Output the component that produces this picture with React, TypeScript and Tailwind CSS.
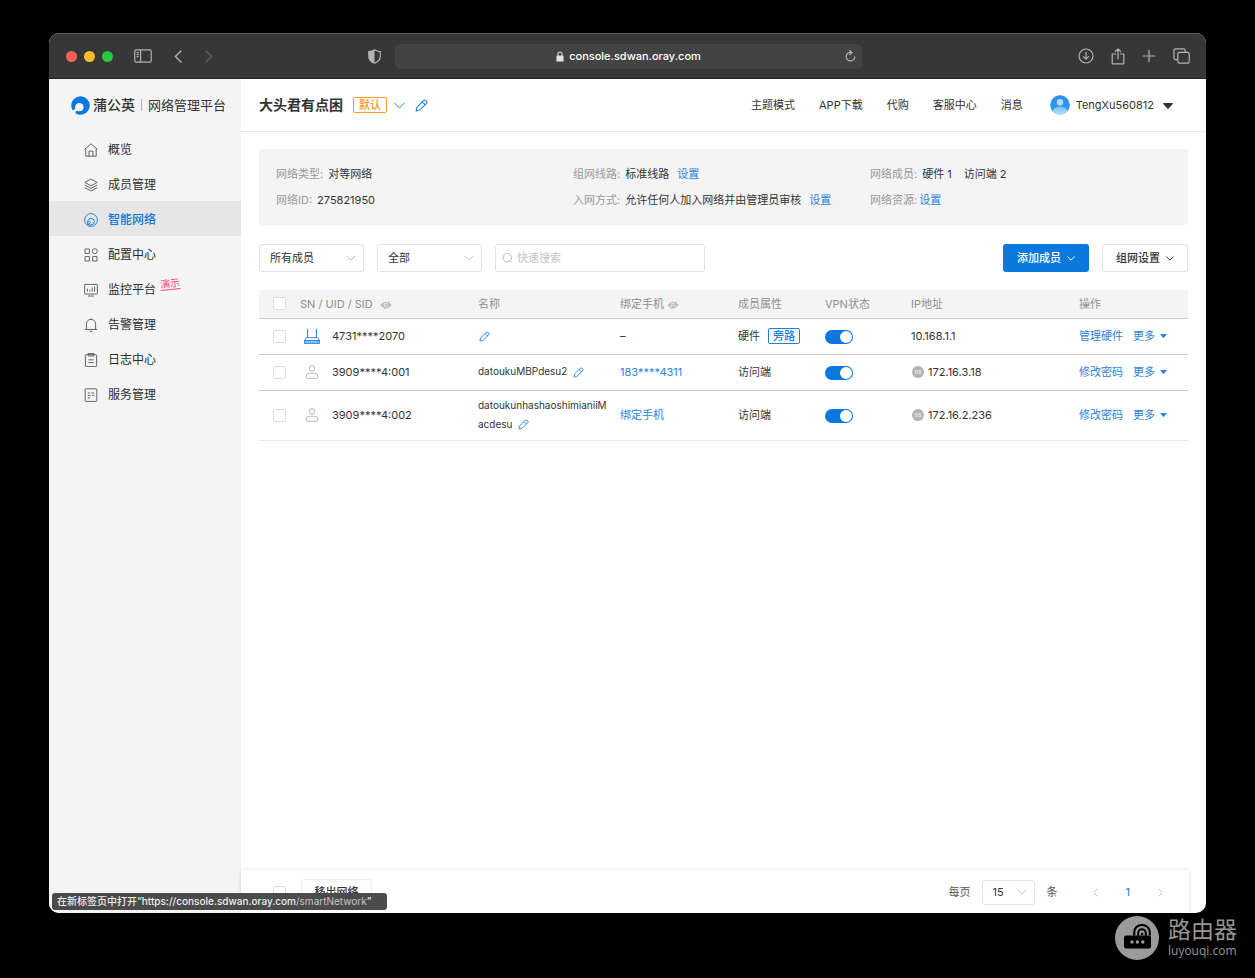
import React from "react";

const blue = "text-[#2a82dc]";

function Pencil({ className = "size-3" }: { className?: string }) {
  return (
    <svg viewBox="0 0 24 24" fill="none" stroke="currentColor" strokeWidth="2" strokeLinejoin="round" strokeLinecap="round" className={className} aria-hidden="true">
      <path d="M15.5 3.2 Q17.4 1 19.8 2.9 L21.2 4.2 Q23.2 6.2 21.3 8.2 L8.6 20.4 L2 22 L3.4 15.6 Z" />
      <path d="M13.4 5.6 L18.8 10.6" />
    </svg>
  );
}

function Chevron({ className = "" }: { className?: string }) {
  return (
    <svg viewBox="0 0 12 7" fill="none" stroke="currentColor" className={className} aria-hidden="true">
      <path d="M1 1 L6 6 L11 1" vectorEffect="non-scaling-stroke" strokeLinecap="round" strokeLinejoin="round" />
    </svg>
  );
}

function Triangle({ className = "" }: { className?: string }) {
  return (
    <svg viewBox="0 0 10 6" fill="currentColor" className={className} aria-hidden="true">
      <path d="M0.6 0 H9.4 Q10.2 0.1 9.7 0.9 L5.6 5.6 Q5 6.2 4.4 5.6 L0.3 0.9 Q-0.2 0.1 0.6 0Z" />
    </svg>
  );
}

function EyeOff() {
  return (
    <svg viewBox="0 0 24 16" className="mt-[2px] h-2 w-3" aria-hidden="true">
      <path d="M0.5 8 Q12 -5.5 23.5 8 Q12 21.5 0.5 8Z" fill="#bdbdbd" />
      <circle cx="12" cy="8" r="4.6" fill="#f4f4f4" />
      <circle cx="12" cy="8" r="3.2" fill="#b9b9b9" />
      <path d="M17 0 L6 16" stroke="#f4f4f4" strokeWidth="1.6" />
      <path d="M19 0 L8 16" stroke="#aaaaaa" strokeWidth="1.6" />
    </svg>
  );
}

const menuIcons: Record<string, React.ReactNode> = {
  home: (
    <>
      <path d="M0.6 6.3 L7 0.8 L13.4 6.3" />
      <path d="M1.8 5.4 V13.2 H12.2 V5.4" />
      <path d="M5 13 V8.2 H9 V13" />
    </>
  ),
  layers: (
    <>
      <path d="M7 1 L13.2 4.4 L7 7.8 L0.8 4.4Z" />
      <path d="M0.8 7 L7 10.4 L13.2 7" />
      <path d="M0.8 9.6 L7 13 L13.2 9.6" />
    </>
  ),
  network: (
    <>
      <circle cx="7" cy="7" r="6.4" />
      <path d="M3.8 11 Q2.8 6.4 6.6 5.4 Q10.2 5.2 10.4 8.6 Q10.2 11.8 7 12 Q5 12 3.4 11.4" />
      <path d="M4.4 8.8 Q6.2 7.6 6.6 9.4 Q6.4 11 4 11.2" />
    </>
  ),
  grid: (
    <>
      <rect x="1" y="1" width="4.4" height="4.4" />
      <circle cx="10.8" cy="3.2" r="2.5" />
      <rect x="1" y="8.6" width="4.4" height="4.4" />
      <rect x="8.6" y="8.6" width="4.4" height="4.4" />
    </>
  ),
  monitor: (
    <>
      <rect x="0.6" y="1.4" width="12.8" height="9.6" rx="0.6" />
      <path d="M4 13 H10 M3.4 5.6 V8.6 M5.8 6.6 V8.6 M8.2 4.4 V8.6 M10.6 3.6 V8.6" />
    </>
  ),
  bell: (
    <>
      <path d="M2.4 11.4 V6.2 Q2.6 1.6 7 1.4 Q11.4 1.6 11.6 6.2 V11.4" />
      <path d="M0.8 11.5 H13.2 M5.6 13.3 H8.4 M7 0.4 V1.4" />
    </>
  ),
  clipboard: (
    <>
      <rect x="1.4" y="1.6" width="11.2" height="12" rx="0.8" />
      <path d="M4.2 0.6 H9.8 V3 H4.2Z M4.4 6.8 H9.6 M4.4 9.6 H9.6" />
    </>
  ),
  form: (
    <>
      <rect x="1.2" y="0.8" width="11.6" height="12.6" rx="0.6" />
      <path d="M3.8 5 H6 M7.4 5 H10.2 M3.8 7.4 H6.6 M8 7.4 H10.2 M3.8 10 H6" />
    </>
  ),
};

const menu = [
  { label: "概览", icon: "home" },
  { label: "成员管理", icon: "layers" },
  { label: "智能网络", icon: "network", active: true },
  { label: "配置中心", icon: "grid" },
  { label: "监控平台", icon: "monitor", demo: true },
  { label: "告警管理", icon: "bell" },
  { label: "日志中心", icon: "clipboard" },
  { label: "服务管理", icon: "form" },
];

function TitleBar() {
  return (
    <div className="flex h-[46px] shrink-0 items-center border-t border-b border-t-[#5c5c5c] border-b-[#222222] bg-[#373737] pr-4 pl-[17px] text-[#b4b4b4]">
      <div className="flex flex-1 items-center">
        <div className="flex gap-[7px]">
          <span className="size-[11px] rounded-full bg-[#fe5f57]" />
          <span className="size-[11px] rounded-full bg-[#febb2e]" />
          <span className="size-[11px] rounded-full bg-[#28c840]" />
        </div>
        <button type="button" aria-label="边栏" className="ml-[21px]">
          <svg viewBox="0 0 18 14" fill="none" stroke="currentColor" strokeWidth="1.2" className="h-[14px] w-[18px]">
            <rect x="0.8" y="0.8" width="16.4" height="12.4" rx="1.6" />
            <path d="M6.6 1 V13 M2.6 3.6 H4.8 M2.6 5.6 H4.8 M2.6 7.6 H4.8" />
          </svg>
        </button>
        <button type="button" aria-label="后退" className="ml-[22px]">
          <svg viewBox="0 0 8 13" fill="none" stroke="currentColor" strokeWidth="1.4" strokeLinecap="round" strokeLinejoin="round" className="h-[13px] w-2">
            <path d="M7 1 L1.4 6.5 L7 12" />
          </svg>
        </button>
        <button type="button" aria-label="前进" className="ml-[23px] text-[#5e5e5e]">
          <svg viewBox="0 0 8 13" fill="none" stroke="currentColor" strokeWidth="1.4" strokeLinecap="round" strokeLinejoin="round" className="h-[13px] w-2">
            <path d="M1 1 L6.6 6.5 L1 12" />
          </svg>
        </button>
        <button type="button" aria-label="隐私报告" className="mr-[14px] ml-auto">
          <svg viewBox="0 0 13 15" className="h-[15px] w-[13px]">
            <path d="M6.5 0.8 Q9 2.4 12.2 2.6 V7.6 Q12 12 6.5 14.2 Q1 12 0.8 7.6 V2.6 Q4 2.4 6.5 0.8Z" fill="none" stroke="currentColor" strokeWidth="1.2" />
            <path d="M6.5 0.8 V14.2 Q1 12 0.8 7.6 V2.6 Q4 2.4 6.5 0.8Z" fill="currentColor" />
          </svg>
        </button>
      </div>
      <div className="flex h-[25px] w-[42%] max-w-[467px] items-center rounded-[5px] bg-[#434343] px-[6px]">
        <div className="flex flex-1 items-center justify-center gap-[5px] pl-3 text-[11px] font-medium text-white">
          <svg viewBox="0 0 8 11" className="h-[11px] w-2" aria-hidden="true">
            <rect x="0.4" y="4.6" width="7.2" height="6" rx="0.9" fill="#dedede" />
            <path d="M2 5 V3 Q2 1 4 1 Q6 1 6 3 V5" fill="none" stroke="#dedede" strokeWidth="1.1" />
          </svg>
          console.sdwan.oray.com
        </div>
        <button type="button" aria-label="重新载入">
          <svg viewBox="0 0 11 12" fill="none" stroke="currentColor" strokeWidth="1.2" strokeLinecap="round" className="h-3 w-[11px]">
            <path d="M6.2 2.4 A4.3 4.3 0 1 0 9.8 6.8" />
            <path d="M4.8 0.6 L7 2.5 L4.9 4.6" />
          </svg>
        </button>
      </div>
      <div className="flex flex-1 items-center justify-end gap-[17px]">
        <button type="button" aria-label="下载">
          <svg viewBox="0 0 16 16" fill="none" stroke="currentColor" strokeWidth="1.2" strokeLinecap="round" strokeLinejoin="round" className="size-4">
            <circle cx="8" cy="8" r="7" />
            <path d="M8 4.4 V11 M5.4 8.6 L8 11.2 L10.6 8.6" />
          </svg>
        </button>
        <button type="button" aria-label="分享">
          <svg viewBox="0 0 14 17" fill="none" stroke="currentColor" strokeWidth="1.2" strokeLinecap="round" strokeLinejoin="round" className="h-[17px] w-[14px]">
            <path d="M4.6 6 H1.2 V15.8 H12.8 V6 H9.4 M7 10.8 V1 M4.2 3.6 L7 0.9 L9.8 3.6" />
          </svg>
        </button>
        <button type="button" aria-label="新标签页">
          <svg viewBox="0 0 14 14" fill="none" stroke="currentColor" strokeWidth="1.2" strokeLinecap="round" className="size-[14px]">
            <path d="M7 1.2 V12.8 M1.2 7 H12.8" />
          </svg>
        </button>
        <button type="button" aria-label="标签页概览">
          <svg viewBox="0 0 17 16" fill="none" stroke="currentColor" strokeWidth="1.2" className="h-4 w-[17px]">
            <rect x="4.8" y="4.4" width="11.4" height="10.8" rx="1.6" />
            <path d="M4.6 11.6 H2.6 Q1 11.6 1 10 V2.4 Q1 0.8 2.6 0.8 H10.6 Q12.2 0.8 12.2 2.4 V4.2" />
          </svg>
        </button>
      </div>
    </div>
  );
}

function Sidebar() {
  return (
    <aside className="w-48 shrink-0 bg-[#f4f4f4]">
      <div className="flex h-[52px] items-center pl-[22px] text-[#333333]">
        <svg viewBox="0 0 20 20" className="size-[19px]" aria-hidden="true">
          <circle cx="10" cy="10" r="9.8" fill="#0a78dc" />
          <circle cx="8.8" cy="11.8" r="4.5" fill="#f4f4f4" />
          <path d="M5 12.6 L3.2 14.4 L1.4 15 L4.2 18.6 L5.2 16.2 L8 15.6 Z" fill="#f4f4f4" />
          <path d="M5.2 16 Q8.4 17 10.6 15.4 L12 18 L9 19.6 L5.4 18.8 Z" fill="#0a78dc" />
        </svg>
        <span className="ml-[3px] text-[14px] leading-5 font-medium">蒲公英</span>
        <span className="mx-[6px] h-3 w-px bg-[#b4b4b4]" />
        <span className="text-[13px] leading-5">网络管理平台</span>
      </div>
      <nav>
        {menu.map((m) => (
          <a
            key={m.label}
            href="#"
            className={
              m.active
                ? "flex h-[35px] items-center gap-[10px] bg-[#e6e6e6] pt-[3px] pl-[35px] text-[12px] font-medium text-[#0f78d6]"
                : "flex h-[35px] items-center gap-[10px] pt-[3px] pl-[35px] text-[12px] text-[#2b2b2b]"
            }
          >
            <svg viewBox="0 0 14 14" fill="none" stroke="currentColor" strokeWidth="0.9" strokeLinejoin="round" className={m.active ? "size-[14px]" : "size-[14px] text-[#555555]"} aria-hidden="true">
              {menuIcons[m.icon]}
            </svg>
            <span className="relative">
              {m.label}
              {m.demo && (
                <span className="absolute -top-1 left-full ml-1 -rotate-6 border-b border-[#ee4d80] text-[10px] leading-3 whitespace-nowrap text-[#ee3f78]">
                  演示
                </span>
              )}
            </span>
          </a>
        ))}
      </nav>
    </aside>
  );
}

function Header() {
  return (
    <header className="flex h-[53px] shrink-0 items-center border-b border-[#e6e6e6] pr-[33px] pl-[18px]">
      <h1 className="text-[14px] leading-5 font-bold text-[#333333]">大头君有点困</h1>
      <span className="ml-[10px] rounded-[2px] border border-[#ff9d2b] px-[5px] text-[11px] leading-[14px] font-medium text-[#ff9414]">默认</span>
      <button type="button" aria-label="切换网络" className={`ml-[6px] ${blue}`}>
        <Chevron className="h-[7px] w-[13px]" />
      </button>
      <button type="button" aria-label="修改网络名称" className={`ml-[9px] ${blue}`}>
        <Pencil className="size-[13px]" />
      </button>
      <nav className="ml-auto flex gap-6 text-[11px] text-[#333333]">
        <a href="#">主题模式</a>
        <a href="#">APP下载</a>
        <a href="#">代购</a>
        <a href="#">客服中心</a>
        <a href="#">消息</a>
      </nav>
      <button type="button" className="ml-[27px] flex items-center text-[11px] text-[#333333]">
        <svg viewBox="0 0 20 20" className="mr-[6px] size-5" aria-hidden="true">
          <defs>
            <linearGradient id="avatar" x1="0" y1="0" x2="0" y2="1">
              <stop offset="0" stopColor="#2a92e8" />
              <stop offset="1" stopColor="#2f9cf6" />
            </linearGradient>
            <linearGradient id="body" x1="0" y1="0" x2="0" y2="1">
              <stop offset="0" stopColor="#7fc0f8" />
              <stop offset="1" stopColor="#b9dffc" />
            </linearGradient>
            <clipPath id="disc"><circle cx="10" cy="10" r="10" /></clipPath>
          </defs>
          <g clipPath="url(#disc)">
            <circle cx="10" cy="10" r="10" fill="url(#avatar)" />
            <path d="M1.6 20 Q2.6 11.6 10 11.6 Q17.4 11.6 18.4 20Z" fill="url(#body)" />
          </g>
          <circle cx="10" cy="7.2" r="3.2" fill="#b5dbfb" />
        </svg>
        <span>TengXu560812</span>
        <Triangle className="mt-px ml-[9px] h-[6px] w-[10px]" />
      </button>
    </header>
  );
}

function SetLink() {
  return <a href="#" className={`ml-2 ${blue}`}>设置</a>;
}

function Info({ label, children }: { label: string; children?: React.ReactNode }) {
  return (
    <div className="flex items-center whitespace-nowrap">
      <dt className="text-[#999999]">{label}:</dt>
      <dd className="ml-[5px] flex items-center">{children}</dd>
    </div>
  );
}

function Select({ label, value, className }: { label: string; value: string; className: string }) {
  return (
    <div className={`relative ${className}`}>
      <select aria-label={label} className="size-full appearance-none rounded-[3px] border border-[#e2e2e2] bg-white pl-[10px] text-[11px] text-[#333333]">
        <option>{value}</option>
      </select>
      <Chevron className="pointer-events-none absolute top-1/2 right-2 h-[6px] w-[10px] -translate-y-1/2 text-[#c0c4cc]" />
    </div>
  );
}

function Tick({ label }: { label: string }) {
  return <input type="checkbox" aria-label={label} className="block size-[13px] appearance-none rounded-[2px] border border-[#dddddd] bg-white" />;
}

function Router() {
  return (
    <svg viewBox="0 0 16 16" fill="none" stroke="#2a82dc" className="size-4" aria-hidden="true">
      <path d="M3.6 1 V9.6 M12.4 1 V9.6" strokeWidth="1.1" />
      <path d="M2.2 9.6 H13.8 L15.4 12.6 H0.6Z" strokeWidth="0.9" />
      <rect x="0.6" y="12.4" width="14.8" height="3" fill="#74b2ef" strokeWidth="0.9" />
      <path d="M2.6 14 H13.4" stroke="#d8eafc" strokeWidth="0.8" strokeDasharray="1.4 0.8" />
    </svg>
  );
}

function Person() {
  return (
    <svg viewBox="0 0 16 16" fill="none" stroke="#b8b8b8" className="size-4" aria-hidden="true">
      <circle cx="8" cy="4.4" r="2.8" />
      <path d="M2.2 12.4 Q2.2 9.2 5.4 9.2 H10.6 Q13.8 9.2 13.8 12.4 V12.8 Q13.8 14.4 12.2 14.4 H3.8 Q2.2 14.4 2.2 12.8Z" />
    </svg>
  );
}

const rows = [
  { sn: "4731****2070", router: true, name: "", phone: "–", type: "硬件", side: true, ip: "10.168.1.1", os: false, action: "管理硬件" },
  { sn: "3909****4:001", router: false, name: "datoukuMBPdesu2", phone: "183****4311", type: "访问端", side: false, ip: "172.16.3.18", os: true, action: "修改密码" },
  { sn: "3909****4:002", router: false, name: "datoukunhashaoshimianiiMacdesu", phone: "绑定手机", type: "访问端", side: false, ip: "172.16.2.236", os: true, action: "修改密码" },
];

function Members() {
  return (
    <table className="mt-[18px] w-full table-fixed border-collapse text-left text-[11px] text-[#333333]">
      <colgroup>
        <col className="w-[31px]" />
        <col className="w-[178px]" />
        <col className="w-[142px]" />
        <col className="w-[118px]" />
        <col className="w-[87px]" />
        <col className="w-[86px]" />
        <col className="w-[168px]" />
        <col />
      </colgroup>
      <thead>
        <tr className="h-7 border-b border-[#cfcfcf] bg-[#f4f4f4] text-[#8f8f8f] [&>th]:pl-[10px] [&>th]:font-normal">
          <th className="pl-[14px]!"><Tick label="全选" /></th>
          <th><span className="flex items-center gap-[7px]">SN / UID / SID <EyeOff /></span></th>
          <th>名称</th>
          <th><span className="flex items-center gap-[3px]">绑定手机 <EyeOff /></span></th>
          <th>成员属性</th>
          <th>VPN状态</th>
          <th>IP地址</th>
          <th>操作</th>
        </tr>
      </thead>
      <tbody>
        {rows.map((r) => (
          <tr key={r.sn} className="h-9 border-b border-[#cfcfcf] last:border-[#e8e8e8] [&>td]:pl-[10px]">
            <td className="pl-[14px]!"><Tick label={r.sn} /></td>
            <td>
              <span className="flex items-center gap-3 pl-1">
                {r.router ? <Router /> : <Person />}
                <span>{r.sn}</span>
              </span>
            </td>
            <td className="pt-[5px] pb-[6px] text-[10px] leading-[19px] break-all">
              {r.name}
              <button type="button" aria-label="修改名称" className={`align-middle ${blue} ${r.name ? "ml-[6px]" : "ml-px"}`}>
                <Pencil className="size-[11px]" />
              </button>
            </td>
            <td>{r.phone === "–" ? "–" : <a href="#" className={blue}>{r.phone}</a>}</td>
            <td>
              <span className="flex items-center">
                {r.type}
                {r.side && <span className="ml-2 rounded-[2px] border border-[#1a80dc] px-1 leading-[14px] font-medium text-[#1a80dc]">旁路</span>}
              </span>
            </td>
            <td>
              <input
                type="checkbox"
                role="switch"
                defaultChecked
                aria-label={`${r.sn} VPN`}
                className="mt-px flex h-[14px] w-7 appearance-none items-center justify-end rounded-full bg-[#0a78dc] pr-px before:size-3 before:rounded-full before:bg-white"
              />
            </td>
            <td>
              <span className="flex items-center gap-1">
                {r.os && <span className="ml-px flex size-3 items-center justify-center rounded-full bg-[#b3b3b3] text-[6px] leading-none text-white">os</span>}
                {r.ip}
              </span>
            </td>
            <td>
              <span className={`flex items-center ${blue}`}>
                <a href="#">{r.action}</a>
                <button type="button" className="ml-[10px] flex items-center gap-[5px]">
                  更多 <Triangle className="h-1 w-[7px]" />
                </button>
              </span>
            </td>
          </tr>
        ))}
      </tbody>
    </table>
  );
}

function Pager() {
  return (
    <footer className="mr-[17px] flex h-[43px] shrink-0 items-center overflow-hidden pt-px pr-6 pl-8 text-[11px] text-[#555555] shadow-[0_0_4px_rgba(0,0,0,0.14)]">
      <Tick label="全选本页" />
      <button type="button" className="ml-[15px] h-[26px] w-[71px] rounded-[3px] border border-[#ececec] font-medium text-[#333333]">移出网络</button>
      <span className="ml-auto">每页</span>
      <Select label="每页条数" value="15" className="mr-3 ml-[11px] h-[25px] w-[53px]" />
      <span>条</span>
      <button type="button" aria-label="上一页" className="ml-[33px] text-[#c0c0c0]">
        <Chevron className="h-[5px] w-[9px] rotate-90" />
      </button>
      <button type="button" className="mx-[26px] text-[#1a78d2]">1</button>
      <button type="button" aria-label="下一页" className="text-[#c0c0c0]">
        <Chevron className="h-[5px] w-[9px] -rotate-90" />
      </button>
    </footer>
  );
}

function Watermark() {
  return (
    <div className="flex h-[65px] shrink-0 items-start justify-end gap-[9px] pt-[3px] pr-[17px] text-[#969696]">
      <svg viewBox="0 0 44 44" className="size-11" aria-hidden="true">
        <circle cx="22" cy="22" r="22" fill="#9b9b9b" />
        <rect x="9" y="19.6" width="27" height="13" rx="2" fill="#000" />
        <circle cx="17" cy="26" r="1.7" fill="#9b9b9b" />
        <circle cx="22.4" cy="26" r="1.7" fill="#9b9b9b" />
        <circle cx="27.8" cy="26" r="1.7" fill="#9b9b9b" />
        <path d="M19.2 19.6 V16.6 A7.8 7.8 0 0 1 34.8 16.6 V19.6" fill="none" stroke="#000" strokeWidth="2.2" />
        <path d="M23.2 19.8 V17 A3.8 3.8 0 0 1 30.8 17 V19.8" fill="none" stroke="#000" strokeWidth="2" />
        <circle cx="27" cy="18" r="1.3" fill="#000" />
      </svg>
      <div className="w-[70px]">
        <div className="text-[23px] leading-[29px]">路由器</div>
        <div className="font-['Open_Sans',sans-serif] text-[12px] leading-3">luyouqi.com</div>
      </div>
    </div>
  );
}

export default function App() {
  return (
    <div lang="zh-CN" className="flex min-h-screen flex-col bg-black pt-[33px] font-['Inter','Noto_Sans_CJK_SC',sans-serif]">
      <div className="relative mx-[49px] flex flex-1 flex-col overflow-hidden rounded-[10px] bg-white">
        <TitleBar />
        <div className="flex flex-1">
          <Sidebar />
          <main className="flex min-w-0 flex-1 flex-col">
            <Header />
            <div className="flex-1 px-[18px] pt-[17px]">
              <dl className="grid grid-cols-[297fr_297fr_301fr] gap-y-[10px] rounded-[3px] bg-[#f4f4f4] px-[17px] py-[17px] text-[11px] leading-4 text-[#333333]">
                <Info label="网络类型">对等网络</Info>
                <Info label="组网线路">标准线路<SetLink /></Info>
                <Info label="网络成员">硬件 1<span className="ml-3">访问端 2</span></Info>
                <Info label="网络ID">275821950</Info>
                <Info label="入网方式">允许任何人加入网络并由管理员审核<SetLink /></Info>
                <div className="flex items-center">
                  <dt className="text-[#999999]">网络资源:</dt>
                  <dd className="ml-[2px]"><a href="#" className={blue}>设置</a></dd>
                </div>
              </dl>
              <div className="mt-[19px] flex gap-[13px]">
                <Select label="成员" value="所有成员" className="h-7 w-[105px]" />
                <Select label="范围" value="全部" className="h-7 w-[105px]" />
                <label className="flex h-7 w-[210px] items-center gap-1 rounded-[3px] border border-[#e2e2e2] pl-[6px]">
                  <svg viewBox="0 0 12 12" fill="none" stroke="#b5b9c0" className="size-3" aria-hidden="true">
                    <circle cx="5.8" cy="5.6" r="4.6" />
                    <path d="M8.8 9 L10.8 11" />
                  </svg>
                  <input type="text" aria-label="快速搜索" placeholder="快速搜索" className="w-full min-w-0 bg-transparent text-[11px] outline-none placeholder:text-[#c0c4cc]" />
                </label>
                <button type="button" className="ml-auto flex h-7 w-[86px] items-center justify-center gap-[6px] rounded-[3px] bg-[#0a78dc] text-[11px] font-medium text-white">
                  添加成员 <Chevron className="h-[5px] w-2" />
                </button>
                <button type="button" className="flex h-7 w-[86px] items-center justify-center gap-[6px] rounded-[3px] border border-[#e2e2e2] text-[11px] font-medium text-[#333333]">
                  组网设置 <Chevron className="h-[5px] w-2" />
                </button>
              </div>
              <Members />
            </div>
            <Pager />
          </main>
        </div>
        <div className="absolute bottom-[3px] left-[3px] rounded-[3px] bg-[#4b4b4b] pr-4 pl-[5px] text-[10px] leading-[17px] font-medium whitespace-nowrap text-[#eeeeee]">
          在新标签页中打开“https://console.sdwan.oray.com<span className="font-normal text-[#c4c4c4]">/smartNetwork</span>”
        </div>
      </div>
      <Watermark />
    </div>
  );
}
